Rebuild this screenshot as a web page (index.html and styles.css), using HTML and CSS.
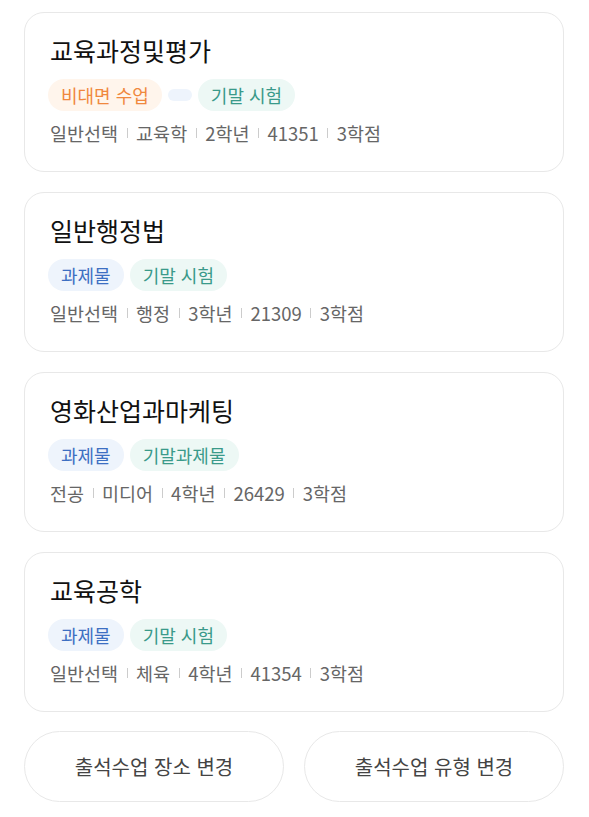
FILE: index.html
```html
<!DOCTYPE html>
<html lang="ko">
<head>
    <meta charset="UTF-8">
    <meta name="viewport" content="width=device-width, initial-scale=1.0">
    <title>수강 과목</title>
    <link rel="stylesheet" href="styles.css">
</head>
<body>
    <div class="page">
        <div class="course-card">
            <h2 class="course-title">교육과정및평가</h2>
            <div class="tags">
                <span class="tag tag-orange">비대면 수업</span>
                <span class="tag tag-empty"></span>
                <span class="tag tag-teal">기말 시험</span>
            </div>
            <div class="info">
                <span>일반선택</span><i class="sep"></i><span>교육학</span><i class="sep"></i><span>2학년</span><i class="sep"></i><span>41351</span><i class="sep"></i><span>3학점</span>
            </div>
        </div>

        <div class="course-card">
            <h2 class="course-title">일반행정법</h2>
            <div class="tags">
                <span class="tag tag-blue">과제물</span>
                <span class="tag tag-teal">기말 시험</span>
            </div>
            <div class="info">
                <span>일반선택</span><i class="sep"></i><span>행정</span><i class="sep"></i><span>3학년</span><i class="sep"></i><span>21309</span><i class="sep"></i><span>3학점</span>
            </div>
        </div>

        <div class="course-card">
            <h2 class="course-title">영화산업과마케팅</h2>
            <div class="tags">
                <span class="tag tag-blue">과제물</span>
                <span class="tag tag-teal">기말과제물</span>
            </div>
            <div class="info">
                <span>전공</span><i class="sep"></i><span>미디어</span><i class="sep"></i><span>4학년</span><i class="sep"></i><span>26429</span><i class="sep"></i><span>3학점</span>
            </div>
        </div>

        <div class="course-card">
            <h2 class="course-title">교육공학</h2>
            <div class="tags">
                <span class="tag tag-blue">과제물</span>
                <span class="tag tag-teal">기말 시험</span>
            </div>
            <div class="info">
                <span>일반선택</span><i class="sep"></i><span>체육</span><i class="sep"></i><span>4학년</span><i class="sep"></i><span>41354</span><i class="sep"></i><span>3학점</span>
            </div>
        </div>

        <div class="actions">
            <button type="button" class="action-btn">출석수업 장소 변경</button>
            <button type="button" class="action-btn">출석수업 유형 변경</button>
        </div>
    </div>
</body>
</html>
```

FILE: styles.css
```css
:root {
    --text-color: #111111;
    --sub-color: #666666;
    --line-color: #e8e8e8;
    --orange: #f0883e;
    --orange-bg: #fff5ec;
    --blue: #3d6fc2;
    --blue-bg: #eef4fc;
    --teal: #3a9a8a;
    --teal-bg: #edf8f5;
}

* {
    box-sizing: border-box;
    margin: 0;
    padding: 0;
}

body {
    font-family: "Noto Sans CJK KR", "Noto Sans", sans-serif;
    background-color: white;
    color: var(--text-color);
}

.page {
    padding: 12px 25px 0 24px;
    display: flex;
    flex-direction: column;
    gap: 20px;
}

.course-card {
    border: 1px solid var(--line-color);
    border-radius: 20px;
    padding: 21px 23px 26px;
    height: 160px;
}

.course-title {
    font-size: 25px;
    font-weight: 400;
    line-height: 32px;
    padding-left: 2px;
}

.tags {
    display: flex;
    align-items: center;
    gap: 6px;
    margin-top: 13px;
}

.tag {
    height: 32px;
    line-height: 32px;
    padding: 0 13px;
    border-radius: 16px;
    font-size: 18px;
}

.tag-orange {
    color: var(--orange);
    background-color: var(--orange-bg);
}

.tag-blue {
    color: var(--blue);
    background-color: var(--blue-bg);
}

.tag-teal {
    color: var(--teal);
    background-color: var(--teal-bg);
}

.tag-empty {
    height: 12px;
    width: 24px;
    padding: 0;
    background-color: var(--blue-bg);
}

.info {
    display: flex;
    align-items: center;
    margin-top: 11px;
    padding-left: 2px;
    font-size: 18.5px;
    line-height: 22px;
    color: var(--sub-color);
}

.sep {
    display: inline-block;
    width: 1px;
    height: 10px;
    background-color: #cccccc;
    margin: 0 8.5px;
}

.actions {
    display: flex;
    gap: 20px;
    margin-top: -1px;
}

.action-btn {
    flex: 1;
    height: 71px;
    border: 1px solid var(--line-color);
    border-radius: 36px;
    background-color: white;
    font-family: inherit;
    font-size: 20px;
    color: #444444;
    cursor: pointer;
}
```
